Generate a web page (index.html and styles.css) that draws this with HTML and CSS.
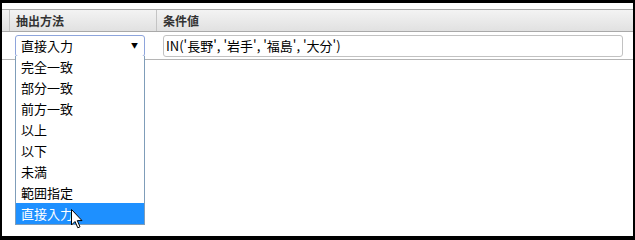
FILE: index.html
```html
<!DOCTYPE html>
<html lang="ja">
<head>
<meta charset="utf-8">
<link rel="stylesheet" href="styles.css">
</head>
<body>
<div class="frame">
  <div class="table">
    <div class="row head">
      <div class="cell c0"></div>
      <div class="cell c1">抽出方法</div>
      <div class="cell c2">条件値</div>
    </div>
    <div class="row body">
      <div class="cell c0"></div>
      <div class="cell c1">
        <div class="select-wrap">
          <div class="select"><span>直接入力</span><span class="arrow">▼</span></div>
          <ul class="options">
            <li>完全一致</li>
            <li>部分一致</li>
            <li>前方一致</li>
            <li>以上</li>
            <li>以下</li>
            <li>未満</li>
            <li>範囲指定</li>
            <li class="selected">直接入力</li>
          </ul>
          <svg class="cursor" width="13" height="20" viewBox="0 0 13 20"><path d="M0.5 0.5 L0.5 16 L4 12.5 L6.8 18.8 L9 17.8 L6.3 11.6 L11 11.6 Z" fill="#fff" stroke="#000" stroke-width="1" stroke-linejoin="miter"/></svg>
        </div>
      </div>
      <div class="cell c2">
        <div class="input">IN('長野', '岩手', '福島', '大分')</div>
      </div>
    </div>
  </div>
</div>
</body>
</html>
```
FILE: styles.css
```css
html, body {
  margin: 0;
  padding: 0;
  background: #000;
}
.frame {
  box-sizing: border-box;
  width: 635px;
  height: 239px;
  border-style: solid;
  border-color: #000;
  border-width: 3px 2px 3px 2px;
  background: #fff;
  padding-top: 6px;
  font-family: "Noto Sans CJK JP", "Noto Sans", sans-serif;
  color: #111;
}
.row {
  display: grid;
  grid-template-columns: 8px 147px 1fr;
}
.head {
  height: 21px;
  border-top: 1px solid #a9a9a9;
  border-bottom: 1px solid #a9a9a9;
  background: linear-gradient(#f3f3f3, #e1e1e1);
  font-size: 12px;
  font-weight: bold;
  line-height: 21px;
  color: #333;
}
.head .c0, .head .c1 {
  border-right: 1px solid #c4c4c4;
}
.head .c1, .head .c2 {
  padding-left: 6px;
}
.body {
  height: 27px;
  border-bottom: 1px solid #b5b5b5;
  font-size: 13px;
}
.body .c1 {
  padding: 3px 0 0 5px;
}
.body .c2 {
  padding: 3px 10px 0 6px;
}
.select-wrap {
  position: relative;
  width: 130px;
}
.select {
  box-sizing: border-box;
  height: 22px;
  border: 1px solid #8ea5dc;
  border-radius: 3px;
  display: flex;
  justify-content: space-between;
  align-items: center;
  padding: 0 6px 0 5px;
  line-height: 20px;
  color: #000;
}
.arrow {
  font-size: 7px;
  color: #000;
  margin-bottom: 3px;
}
.options {
  position: absolute;
  left: 0;
  top: 21px;
  width: 130px;
  box-sizing: border-box;
  margin: 0;
  padding: 0;
  list-style: none;
  background: #fff;
  border: 1px solid #7f9db9;
  border-top: none;
}
.options li {
  height: 21px;
  line-height: 21px;
  padding-left: 5px;
  color: #000;
}
.options li.selected {
  background: #1e90ff;
  color: #fff;
}
.cursor {
  position: absolute;
  left: 56px;
  top: 174px;
}
.input {
  box-sizing: border-box;
  height: 22px;
  border: 1px solid #c2c2c2;
  border-radius: 3px;
  padding-left: 2px;
  line-height: 20px;
  color: #000;
}
```
